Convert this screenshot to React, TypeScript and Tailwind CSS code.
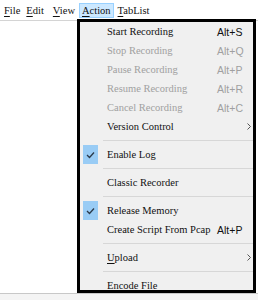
import React from 'react';

type Item =
  | { kind: 'sep' }
  | {
      kind: 'item';
      label: string;
      ul?: number;
      shortcut?: string;
      disabled?: boolean;
      checked?: boolean;
      sub?: boolean;
    };

const items: Item[] = [
  { kind: 'item', label: 'Start Recording', shortcut: 'Alt+S' },
  { kind: 'item', label: 'Stop Recording', shortcut: 'Alt+Q', disabled: true },
  { kind: 'item', label: 'Pause Recording', shortcut: 'Alt+P', disabled: true },
  { kind: 'item', label: 'Resume Recording', shortcut: 'Alt+R', disabled: true },
  { kind: 'item', label: 'Cancel Recording', shortcut: 'Alt+C', disabled: true },
  { kind: 'item', label: 'Version Control', sub: true },
  { kind: 'sep' },
  { kind: 'item', label: 'Enable Log', checked: true },
  { kind: 'sep' },
  { kind: 'item', label: 'Classic Recorder' },
  { kind: 'sep' },
  { kind: 'item', label: 'Release Memory', checked: true },
  { kind: 'item', label: 'Create Script From Pcap', shortcut: 'Alt+P' },
  { kind: 'sep' },
  { kind: 'item', label: 'Upload', ul: 0, sub: true },
  { kind: 'sep' },
  { kind: 'item', label: 'Encode File' },
];

const Label = ({ text, ul }: { text: string; ul?: number }) =>
  ul === undefined ? (
    <>{text}</>
  ) : (
    <>
      {text.slice(0, ul)}
      <span className="underline underline-offset-2">{text[ul]}</span>
      {text.slice(ul + 1)}
    </>
  );

const Check = () => (
  <svg width="9" height="8" viewBox="0 0 9 8">
    <path d="M1 4 L3.5 6.5 L8 1.5" fill="none" stroke="#2b3a4a" strokeWidth="1.3" />
  </svg>
);

const Chevron = () => (
  <svg width="4" height="7" viewBox="0 0 4 7">
    <path d="M0.5 0.5 L3.5 3.5 L0.5 6.5" fill="none" stroke="#555" strokeWidth="1" />
  </svg>
);

export default function App() {
  const top = [
    { text: 'File', ml: 'ml-[4px]' },
    { text: 'Edit', ml: 'ml-[6px]' },
    { text: 'View', ml: 'ml-[9px]' },
  ];

  return (
    <div className="relative w-[258px] h-[300px] bg-white overflow-hidden flex flex-col font-['Liberation_Serif',serif] text-[10.5px] text-[#111]">
      {/* menu bar */}
      <div className="h-[21px] flex items-start border-b border-[#d4d4d4] shrink-0">
        {top.map(t => (
          <span key={t.text} className={`${t.ml} mt-[5px] leading-[12px]`}>
            <Label text={t.text} ul={0} />
          </span>
        ))}
        <span className="ml-[4px] mt-[3px] h-[15px] px-[2px] flex items-center bg-[#cce8ff] border border-[#99d1ff] leading-[12px]">
          <Label text="Action" ul={0} />
        </span>
        <span className="ml-[4px] mt-[5px] leading-[12px]">
          <Label text="TabList" ul={0} />
        </span>
      </div>

      <div className="flex-1" />
      <div className="h-[7px] shrink-0 border-t border-[#c8c8c8] bg-[#f4f4f4]" />

      {/* Action dropdown */}
      <div className="absolute left-[77px] top-[19px] w-[179px] h-[274px] border-[3px] border-black bg-[#f0f0f0] overflow-hidden flex flex-col">
        {items.map((it, i) =>
          it.kind === 'sep' ? (
            <div key={i} className="h-[9px] shrink-0 flex items-center pl-[23px]">
              <div className="h-px flex-1 bg-[#d7d7d7]" />
            </div>
          ) : (
            <div
              key={i}
              className={`relative h-[19px] shrink-0 flex items-center ${it.disabled ? 'text-[#a0a0a0]' : 'text-[#111]'}`}
            >
              <div className="w-[27px] h-full flex items-stretch">
                {it.checked && (
                  <div className="ml-[3px] w-[15px] bg-[#99ccf5] flex items-center justify-center">
                    <Check />
                  </div>
                )}
              </div>
              <span className="w-[110px] whitespace-nowrap leading-[12px]">
                <Label text={it.label} ul={it.ul} />
              </span>
              {it.shortcut && (
                <span className="font-['Liberation_Sans',sans-serif] text-[10.5px] leading-[12px]">{it.shortcut}</span>
              )}
              {it.sub && (
                <span className="absolute right-[2px] top-[6px] flex">
                  <Chevron />
                </span>
              )}
            </div>
          )
        )}
      </div>
    </div>
  );
}
